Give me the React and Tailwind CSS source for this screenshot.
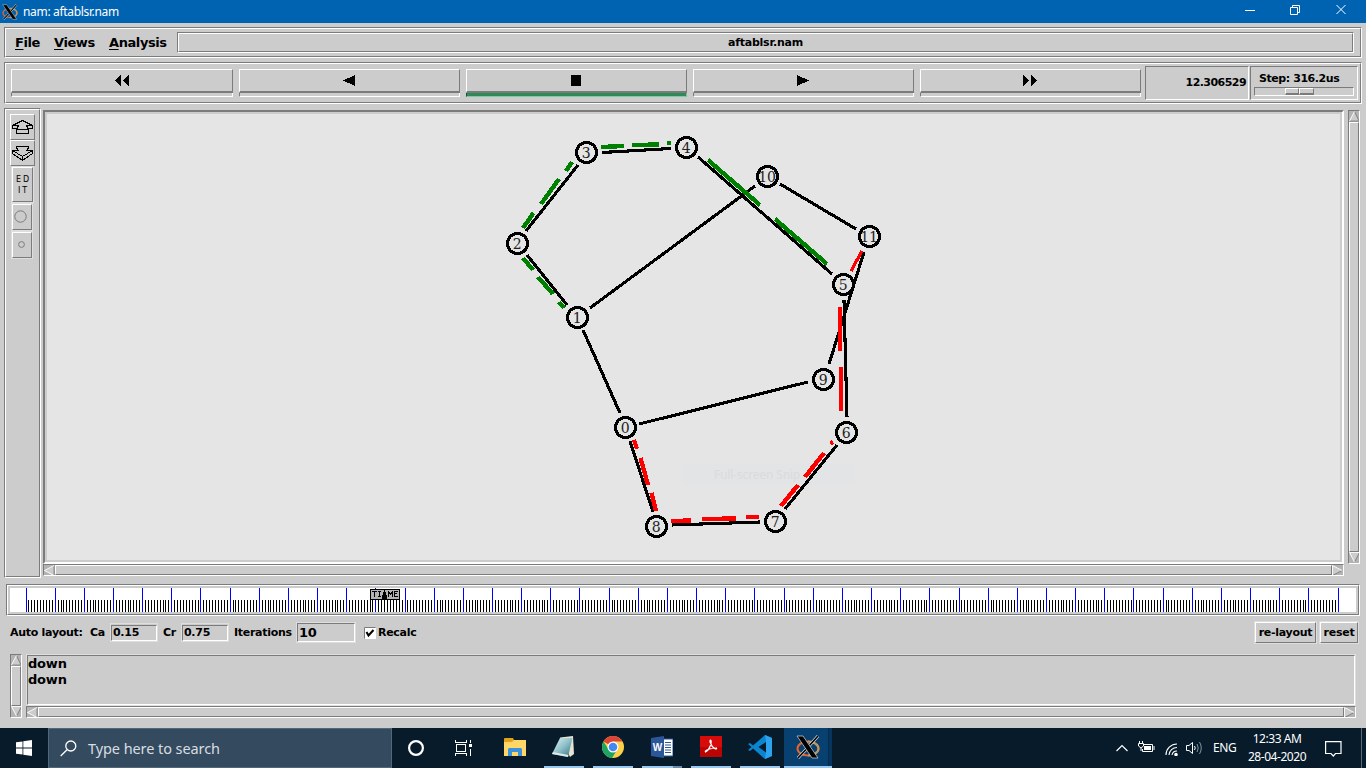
import React from 'react';

const dark = '#7b7b7b';

function Groove({ className = '', inner = '', children }) {
  return (
    <div className={'border border-t-[#7b7b7b] border-l-[#7b7b7b] border-b-white border-r-white flex ' + className}>
      <div className={'flex flex-1 min-w-0 border border-t-white border-l-white border-b-[#7b7b7b] border-r-[#7b7b7b] ' + inner}>
        {children}
      </div>
    </div>
  );
}

const raised = 'border border-t-white border-l-white border-b-[#7b7b7b] border-r-[#7b7b7b] ';
const sunken = 'border border-t-[#7b7b7b] border-l-[#7b7b7b] border-b-white border-r-white ';

function PlayButton({ children, active, width = 'w-[221px]' }) {
  return (
    <div className={'flex flex-col shrink-0 h-[28px] ' + width}>
      <div className={raised + 'h-[24px] border-b-2 flex items-center justify-center pb-px'}>
        <svg width="21" height="12" viewBox="0 0 21 12" fill="#000" shapeRendering="crispEdges">{children}</svg>
      </div>
      <div className={'h-[4px] border-l border-r border-b ' + (active ? 'bg-[#2e8b57] border-l-[#1b5434] border-r-[#82b99a] border-b-[#82c9a2]' : 'border-l-[#7b7b7b] border-r-white border-b-white')} />
    </div>
  );
}

function Arrow({ dir }) {
  const p = {
    left: ['M11 0.5 L0.5 6 L11 11.5', 'M11 0.5 V11.5'],
    right: ['M0.5 11.5 V0.5 L11 6', 'M11 6 L0.5 11.5'],
    up: ['M0.5 11 L6 0.5', 'M6 0.5 L11 11 H0.5'],
    down: ['M11.5 0.5 H0.5 L6 11', 'M6 11 L11.5 0.5'],
  }[dir];
  return (
    <svg width="11" height="11" viewBox="0 0 12 12" className="shrink-0 block bg-[#b3b3b3]">
      <path d={p[0] + (dir === 'up' ? ' L11 11 H0.5' : ' Z')} fill="#ccc" />
      <path d={p[1]} stroke={dark} fill="none" />
      <path d={p[0]} stroke="#fff" fill="none" />
    </svg>
  );
}

function HScroll({ className = '' }) {
  return (
    <div className={sunken + 'h-[12px] flex items-center overflow-hidden ' + className}>
      <Arrow dir="left" />
      <div className={raised + 'flex-1 h-[10px]'} />
      <Arrow dir="right" />
    </div>
  );
}

function VScroll({ className = '' }) {
  return (
    <div className={sunken + 'w-[12px] flex flex-col items-center overflow-hidden ' + className}>
      <Arrow dir="up" />
      <div className={raised + 'flex-1 w-[10px]'} />
      <Arrow dir="down" />
    </div>
  );
}

const nodes = [[625, 427], [577, 317], [517, 243], [586, 152], [686, 147], [843, 284], [846, 432], [775, 521], [656, 526], [823, 379], [767, 176], [869, 236]];
const links = [[583, 330, 620, 413], [639, 424, 808, 382], [630, 441, 653, 512], [672, 525, 760, 522], [785, 509, 837, 445], [844, 300, 847, 417], [698, 157, 832, 274], [602, 152.5, 671, 148.5], [526, 231, 578, 165], [527, 255, 567, 305], [590, 308, 755, 186], [780, 184, 856, 229], [864, 252, 829, 364]];
const green = [[601, 147, 624, 146], [632, 145, 659, 144.5], [667, 143, 671, 143], [572, 162, 566, 171], [559, 179, 541, 204], [533.5, 213, 523, 228], [523, 258, 533, 270], [538, 277, 553, 294], [559, 302, 564, 308], [708, 160, 760, 205], [775, 219, 827, 264]];
const red = [[862, 251, 851, 271], [840, 307, 840, 351], [841, 367, 841, 411], [634, 440, 637, 449], [640.5, 458, 648, 485], [651.5, 493, 656, 511], [671, 521, 691, 520.5], [702, 519, 736, 518.5], [746, 517, 759, 517], [781, 506, 798, 485], [805, 477, 824, 453], [830.5, 443.5, 833, 442]];

function Line({ l, c, w }) {
  return <line x1={l[0]} y1={l[1]} x2={l[2]} y2={l[3]} stroke={c} strokeWidth={w} />;
}

function Network() {
  return (
    <svg width="1293" height="446" viewBox="47 114 1293 446" className="block" shapeRendering="crispEdges">
      <rect x="683" y="463" width="172" height="22" fill="#e3e4e5" />
      <text x="714" y="478.5" fontFamily="Noto Sans" fontSize="12" letterSpacing="-0.15" fill="#dadbdd">Full-screen Snip</text>
      {links.map((l, i) => <Line key={i} l={l} c="#000" w="3.1" />)}
      {green.map((l, i) => <Line key={i} l={l} c="#008000" w="4.4" />)}
      {red.map((l, i) => <Line key={i} l={l} c="#f00" w={i === 0 ? 3.2 : 4.4} />)}
      {nodes.map(([x, y], i) => (
        <g key={i}>
          <circle cx={x + 0.5} cy={y + 0.5} r="10" fill="#e5e5e5" stroke="#000" strokeWidth="3" />
          <text x={x} y={y + 6} textAnchor="middle" fontFamily="DejaVu Serif" fontSize="14" letterSpacing="-0.2" fill="#222">{i}</text>
        </g>
      ))}
    </svg>
  );
}

function Timeline() {
  const ticks = [];
  for (let i = 0; i <= 450; i++) ticks.push(Math.floor(16.02 + i * 2.9156));
  return (
    <svg width="1346" height="24" viewBox="0 0 1346 24" className="block bg-white" shapeRendering="crispEdges">
      {ticks.map((x, i) => i % 10 === 0
        ? <rect key={i} x={x} y="0" width="1" height="24" fill="#00f" />
        : <rect key={i} x={x} y="12" width="1" height="12" fill="#000" />)}
      <rect x="360.5" y="1.5" width="29" height="10" fill="#b3b3b3" stroke="#000" />
      <path d="M362 3.500h5M364.500 3v6M368 3.500h3M369.500 3v6M368 8.500h3M378.500 9v-6M379.500 4v2M380.500 5v2M381.500 4v2M382.500 9v-6M388 3.500h-4M384.500 3v6M384 8.500h4M384 5.500h3" stroke="#000" fill="none" />
      <path d="M374 2h1v2h1v3h1v4h-5v-4h1v-3h1Z" />
    </svg>
  );
}

function Field({ children, className }) {
  return <div className={'border border-[#dedede] flex ' + className}><div className={sunken + 'flex-1 flex items-center pl-px'}>{children}</div></div>;
}

function XLogo({ size }) {
  return (
    <svg width={size} height={size} viewBox="0 0 24 24" className="block">
      <ellipse cx="12" cy="13.500" rx="10.500" ry="7" fill="none" stroke="#e8622c" strokeWidth="2" />
      <path d="M12 6.500a10.500 7 0 0 1 0 14" fill="none" stroke="#b59a62" strokeWidth="2" />
      <path d="M22 1L12.500 11.500M10.500 14L2 23" stroke="#ddd" strokeWidth="3" />
      <path d="M22 1L12.500 11.500M10.500 14L2 23" stroke="#000" strokeWidth="1.600" />
      <path d="M1 1h6l15 22h-6Z" fill="#000" stroke="#ddd" strokeWidth=".7" />
    </svg>
  );
}

function Task({ children, line = true, extra }) {
  return (
    <div className="w-[49px] h-full flex flex-col items-center justify-end">
      <div className="flex-1 flex items-center justify-center">{children}</div>
      <div className={'h-[2px] w-[40px] flex justify-end ' + (line ? 'bg-[#97c8f1]' : '')}>{extra && <div className="w-[9px] h-full bg-[#6a8caa]" />}</div>
    </div>
  );
}

function Taskbar() {
  return (
    <div className="h-[40px] bg-[#071b2b] flex items-stretch text-white font-['Noto_Sans',sans-serif]">
      <div className="w-[48px] flex items-center justify-center">
        <svg width="16" height="16" viewBox="0 0 16 16" fill="#fff"><path d="M0 2.300L6.500 1.400V7.500H0ZM7.300 1.300L16 0V7.500H7.300ZM0 8.400H6.500V14.600L0 13.700ZM7.300 8.400H16V16L7.300 14.700Z" /></svg>
      </div>
      <div className="w-[344px] bg-[#344b5f] border border-[#50687c] flex items-center pl-[11px]">
        <svg width="17" height="17" viewBox="0 0 17 17" fill="none" stroke="#fff" strokeWidth="1.300"><circle cx="10.800" cy="6" r="5" /><path d="M7 9.800L.7 16" /></svg>
        <span className="ml-[11px] text-[14.500px] leading-5 text-[#d8dde1] tracking-[-0.080px]">Type here to search</span>
      </div>
      <div className="w-[48px] flex items-center justify-center">
        <svg width="18" height="18" viewBox="0 0 18 18"><circle cx="9" cy="9" r="6.900" fill="none" stroke="#fff" strokeWidth="2.200" /></svg>
      </div>
      <div className="w-[48px] flex items-center justify-center pr-[2px]">
        <svg width="17" height="16" viewBox="0 0 17 16" fill="none" stroke="#fff" shapeRendering="crispEdges"><path d="M.5 0V2.500H11.500V0M1.500 4.500H10.500V11.500H1.500ZM.5 16V13.500H11.500V16M15.500 0V3M15.500 9V16" /><path d="M14 4h3v3h-3z" fill="#fff" stroke="none" /></svg>
      </div>
      <div className="flex pl-[2px]">
        <Task line={false}>
          <svg width="22" height="19" viewBox="0 0 22 19"><path d="M0 1q0-1 1-1h8l1 2h11q1 0 1 1v14H0Z" fill="#e3a21a" /><path d="M0 4h8l2-2h12v16H0Z" fill="#ffd768" /><path d="M4 18v-7l1-1h12l1 1v7h-4v-4H8v4Z" fill="#3c93dc" /></svg>
        </Task>
        <Task>
          <svg width="24" height="22" viewBox="0 0 24 22" className="-ml-[2px]"><defs><linearGradient id="n" x1="0" y1="0" x2="1" y2="1"><stop offset="0" stopColor="#e6f5f6" /><stop offset=".5" stopColor="#8fc0c8" /><stop offset="1" stopColor="#2f6f80" /></linearGradient></defs><path d="M9 1.500L22 0L23 18L19 21Z" fill="#e9e3d2" /><path d="M9 2L21.500 2L17 21L1 18Z" fill="url(#n)" /><path d="M1 18L17 21L17.500 19L2 16Z" fill="#dbe9e9" /></svg>
        </Task>
        <Task>
          <svg width="24" height="24" viewBox="0 0 24 24"><circle cx="12" cy="12" r="11" fill="#fdd04a" /><path d="M12 12L2.500 6.500A11 11 0 0 1 21.500 6.500H12Z" fill="#db4437" /><path d="M2.500 6.500A11 11 0 0 0 11 23L16 15L8 15Z" fill="#1da362" /><circle cx="12" cy="12" r="5.500" fill="#fff" /><circle cx="12" cy="12" r="4.300" fill="#4688f1" /></svg>
        </Task>
        <Task extra>
          <svg width="22" height="22" viewBox="0 0 22 22"><path d="M12 3h10v17H12Z" fill="#fff" stroke="#2b579a" /><path d="M14 6.500h6M14 9h6M14 11.500h6M14 14h6M14 16.500h6" stroke="#2b579a" /><path d="M0 2L13 0V22L0 20Z" fill="#2b579a" /><text x="6.500" y="15" textAnchor="middle" fontFamily="Liberation Sans" fontWeight="700" fontSize="10" fill="#fff">W</text></svg>
        </Task>
        <Task>
          <svg width="22" height="21" viewBox="0 0 22 21" className="-mt-[2px]"><path d="M0 0h22v21H0Z" fill="#d80b0b" /><path d="M0 11h22v10H0Z" fill="#a90000" opacity=".6" /><path d="M10.500 4c2 2-1 10-5 12c-1-1 1-3 11-4c1 2-4 1-6-5c-.7-1-.7-3 0-3Z" fill="none" stroke="#fff" strokeWidth="1.200" /></svg>
        </Task>
        <Task>
          <svg width="24" height="24" viewBox="0 0 24 24"><path d="M17 0L24 3V21L17 24L5 13.500L2 16L0 15L3.500 12L0 9L2 8L5 10.500ZM18 7L10.500 12L18 17.500Z" fill="#0b85cf" fillRule="evenodd" /><path d="M17 0L24 3V21L17 24L18 17V6Z" fill="#2ba3ee" /></svg>
        </Task>
        <div className="w-[48px] bg-[#08406f] flex flex-col">
          <div className="flex-1 flex items-center"><div className="w-[44px] flex justify-center pl-[3px]"><XLogo size="24" /></div><div className="flex-1 h-full bg-[#06365f] border-l border-[#052c4e]" /></div>
          <div className="h-[2px] bg-[#97c8f1]" />
        </div>
      </div>
      <div className="flex-1" />
      <div className="flex items-center">
        <svg width="12" height="8" viewBox="0 0 12 8" fill="none" stroke="#fff" strokeWidth="1.200"><path d="M.5 7L6 1.500L11.500 7" /></svg>
        <svg className="ml-[10px]" width="17" height="14" viewBox="0 0 17 14" fill="none" stroke="#fff"><path d="M6 3.500H14.500V10.500H4.500V8M16 5V9M1.500 0V2.500M4.500 0V2.500M.5 2.500H5.500V5L3 7L.5 5ZM3 7V10" /><path d="M6 5h7v4H6z" fill="#fff" stroke="none" /></svg>
        <svg className="ml-[10px] mt-[2px]" width="13" height="13" viewBox="0 0 13 13" fill="none" stroke="#fff" strokeWidth="1.100"><path d="M1 12A11 11 0 0 1 12 1M4 12A8 8 0 0 1 12 4.500M7 12A5 5 0 0 1 12 8" /><circle cx="11" cy="11.500" r="1.200" fill="#fff" /></svg>
        <svg className="ml-[8px]" width="17" height="14" viewBox="0 0 17 14" fill="none" stroke="#fff"><path d="M.5 4.500H3L6.500 1.500V12.500L3 9.500H.5Z" /><path d="M8.500 5Q10 7 8.500 9" /><path d="M11 3Q13.500 7 11 11M13.500 1Q17 7 13.500 13" stroke="#8495a1" /></svg>
        <span className="ml-[10px] text-[12px] w-[25px] tracking-[-0.400px]">ENG</span>
        <div className="w-[62px] ml-[8px] text-[12px] leading-[18px] text-center whitespace-nowrap tracking-[-0.450px]">12:33 AM<br />28-04-2020</div>
        <svg className="ml-[17px] mt-px" width="17" height="16" viewBox="0 0 17 16" fill="none" stroke="#fff" strokeWidth="1.200"><path d="M.6 .6H16V12.500H10.500L8.300 15L6 12.500H.6Z" /></svg>
        <div className="ml-[19px] w-[5px] h-[40px] border-l border-[#5a6a76]" />
      </div>
    </div>
  );
}

export default function App() {
  return (
    <div className="w-[1366px] h-[768px] overflow-hidden flex flex-col bg-[#ccc] text-black font-['DejaVu_Sans',sans-serif]">
      <div className="h-[23px] shrink-0 bg-[#0063b1] flex items-center text-white pl-[2px]">
        <XLogo size="16" />
        <span className="ml-[5px] font-['Noto_Sans',sans-serif] text-[12px] leading-4 tracking-[-0.330px]">nam: aftablsr.nam</span>
        <div className="flex-1" />
        <svg width="103" height="12" viewBox="0 0 103 12" fill="none" stroke="#fff" className="mr-[18px] -mt-[3px]"><path d="M0 6.500H10M45.500 3.500H52.500V10.500H45.500ZM47.500 3V1.500H54.500V8.500H53M91.500 1L100.500 10M100.500 1L91.500 10" /></svg>
      </div>

      <Groove className="mt-[4px] mx-[4px] h-[31px] shrink-0" inner="items-center pl-[9px] pr-[6px]">
        <div className="flex text-[13px] leading-4 font-bold w-[162px] shrink-0 tracking-[-0.420px] underline-offset-2">
          <span className="w-[39px]"><u>F</u>ile</span><span className="w-[55px]"><u>V</u>iews</span><span><u>A</u>nalysis</span>
        </div>
        <Groove className="flex-1 h-[21px]" inner="items-center justify-center text-[11px] font-bold tracking-[-0.250px] pt-px">aftablsr.nam</Groove>
      </Groove>

      <Groove className="mt-[4px] mx-[4px] h-[42px] shrink-0" inner="items-start pl-[5px] pr-[2px]">
        <div className="flex gap-[6px] w-[1130px] shrink-0 mt-[5px]">
          <PlayButton width="w-[222px]"><path d="M3 6.500L9 1V12ZM11 6.500L17 1V12Z" /></PlayButton>
          <PlayButton><path d="M4 6.500L16 1V12Z" /></PlayButton>
          <PlayButton active><path d="M5 1H15V12H5Z" /></PlayButton>
          <PlayButton><path d="M16 6.500L4 1V12Z" /></PlayButton>
          <PlayButton><path d="M9 6.500L3 1V12ZM17 6.500L11 1V12Z" /></PlayButton>
        </div>
        <div className={sunken + 'ml-[4px] mt-[2px] w-[104px] h-[34px] flex items-center justify-end pr-[2px] text-[11px] font-bold tracking-[-0.550px]'}>12.306529</div>
        <div className={sunken + 'ml-px mt-[2px] w-[108px] h-[34px] px-[3px] pt-[4px]'}>
          <div className="text-[11px] leading-[15px] font-bold pl-[5px] tracking-[-0.430px]">Step: 316.2us</div>
          <div className={sunken + 'mt-[1px] h-[9px] flex pl-[30px]'}>
            <div className={raised + 'w-[14px] h-[7px] border-b-2'} /><div className={raised + 'w-[15px] h-[7px] border-b-2'} />
          </div>
        </div>
      </Groove>

      <div className="flex mt-[4px] h-[470px] shrink-0 pl-[4px]">
        <Groove className="w-[37px] h-[470px]" inner="flex-col pl-[4px] pt-[4px]">
          <div className={raised + 'w-[25px] h-[26px] flex items-center justify-center'}>
            <svg width="21" height="15" viewBox="0 0 21 15" fill="none" stroke="#000" shapeRendering="crispEdges"><path d="M10.500 .5L.5 5.500V8.500H4.500M10.500 .5L20.500 5.500V8.500H16.500M.5 5.500H6.500L4.500 9.500V13.500H16.500V9.500L14.500 5.500H20.500M4.500 9.500H16.500" /></svg>
          </div>
          <div className={raised + 'w-[25px] h-[26px] flex items-center justify-center'}>
            <svg width="21" height="15" viewBox="0 0 21 15" fill="none" stroke="#000" shapeRendering="crispEdges"><path d="M4.500 .5H16.500V2L14.500 4.500H20.500V7.500L10.500 14.500L.5 7.500V4.500H6.500L4.500 2ZM.5 4.500L10.500 10.500L20.500 4.500M10.500 10.500V14.500" /></svg>
          </div>
          <div className={raised + 'ml-[2px] mt-px w-[21px] h-[35px] flex flex-col justify-center items-center text-[8px] leading-[11px] tracking-[2px] pl-[2px] outline outline-[#dedede]'}><span>ED</span><span>IT</span></div>
          <div className={raised + 'ml-[2px] mt-[2px] w-[20px] h-[26px] flex items-center justify-center outline outline-[#dedede] pr-[3px] pb-[2px]'}><svg width="13" height="13"><circle cx="6.500" cy="6.500" r="5.700" fill="none" stroke={dark} /></svg></div>
          <div className={raised + 'ml-[2px] mt-[2px] w-[20px] h-[26px] flex items-center justify-center outline outline-[#dedede] pr-[2px] pb-px'}><svg width="7" height="7"><circle cx="3.500" cy="3.500" r="2.900" fill="none" stroke={dark} /></svg></div>
        </Groove>
        <div className="ml-[2px] mt-[2px] w-[1301px] flex flex-col">
          <div className="h-[454px] border-2 border-t-[#7b7b7b] border-l-[#7b7b7b] border-b-white border-r-white">
            <div className="border-2 border-[#ccc] bg-[#e5e5e5] h-[450px]"><Network /></div>
          </div>
          <HScroll />
        </div>
        <VScroll className="ml-[4px] mt-[2px] h-[454px]" />
      </div>

      <Groove className="mt-[6px] mx-[6px] h-[32px] shrink-0" inner="p-[2px]"><Timeline /></Groove>

      <div className="flex items-center h-[33px] shrink-0 pl-[10px] pr-[8px] text-[11px] font-bold tracking-[-0.280px] whitespace-nowrap">
        <span className="w-[80px] pt-px">Auto layout:</span>
        <span className="w-[20px] pt-px">Ca</span><Field className="w-[48px] h-[19px] pt-px">0.15</Field>
        <span className="w-[18px] ml-[5px] pt-px">Cr</span><Field className="w-[48px] h-[19px] pt-px">0.75</Field>
        <span className="w-[62px] ml-[5px] pt-px">Iterations</span><Field className="w-[60px] h-[21px] text-[13px]">10</Field>
        <svg className="ml-[8px]" width="12" height="12" viewBox="0 0 12 12"><path d="M.5 11.500V.5H11.500" fill="#fff" stroke={dark} /><path d="M1 1h11v11H1z" fill="#fff" /><path d="M2.500 5L4.500 8.500L9.500 3" stroke="#000" strokeWidth="2" fill="none" /></svg>
        <span className="ml-[2px] pt-px">Recalc</span>
        <div className="flex-1" />
        <div className={raised + 'w-[61px] h-[21px] flex items-center justify-center outline outline-[#dedede] pt-px'}>re-layout</div>
        <div className={raised + 'w-[38px] h-[21px] ml-[4px] flex items-center justify-center outline outline-[#dedede] pt-px'}>reset</div>
      </div>

      <div className="flex h-[79px] shrink-0 pt-[5px] pl-[10px]">
        <VScroll className="h-[64px]" />
        <div className="ml-[4px] w-[1330px]">
          <div className={sunken + 'mt-px h-[50px] ml-px mr-px text-[13px] font-bold leading-[16px] tracking-[-0.200px] outline outline-[#dedede]'}>down<br />down</div>
          <HScroll className="mt-px" />
        </div>
      </div>

      <Taskbar />
    </div>
  );
}
